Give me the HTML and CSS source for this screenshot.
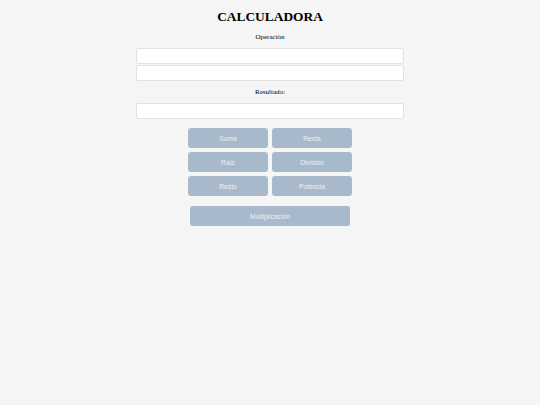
FILE: index.html
```html
<!DOCTYPE html>
<html lang="es">
<head>
<meta charset="utf-8">
<title>Calculadora</title>
<link rel="stylesheet" href="styles.css">
</head>
<body>
<main class="calc">
  <h1 class="title">CALCULADORA</h1>
  <label class="label">Operación</label>
  <div class="inputs">
    <input class="field" type="text">
    <input class="field" type="text">
  </div>
  <label class="label label-result">Resultado:</label>
  <input class="field" type="text">
  <div class="grid">
    <button class="btn">Suma</button>
    <button class="btn">Resta</button>
    <button class="btn">Raíz</button>
    <button class="btn">División</button>
    <button class="btn">Resto</button>
    <button class="btn">Potencia</button>
  </div>
  <button class="btn btn-wide">Multiplicación</button>
</main>
</body>
</html>
```
FILE: styles.css
```css
html, body {
  margin: 0;
  padding: 0;
  background: #f5f5f5;
}
body {
  font-family: "Liberation Serif", "Times New Roman", serif;
  color: #000;
}
.calc {
  width: 268px;
  margin: 0 auto;
  display: flex;
  flex-direction: column;
  align-items: center;
}
.title {
  font-size: 13.4px;
  line-height: 16px;
  font-weight: bold;
  margin: 9px 0 0;
}
.label {
  font-size: 7px;
  line-height: 8px;
  margin-top: 8px;
  margin-bottom: 7px;
}
.label-result {
  margin-top: 7px;
}
.inputs {
  display: flex;
  flex-direction: column;
  gap: 1px;
  width: 100%;
}
.field {
  box-sizing: border-box;
  width: 100%;
  height: 16px;
  margin: 0;
  padding: 0 4px;
  background: #fff;
  border: 1px solid #e2e2e2;
  border-radius: 2px;
  outline: none;
}
.grid {
  display: grid;
  grid-template-columns: 80px 80px;
  grid-auto-rows: 20px;
  gap: 4px;
  margin-top: 9px;
}
.btn {
  margin: 0;
  padding: 0;
  border: none;
  border-radius: 3px;
  background: #a9b9cc;
  color: #eef1f5;
  font-family: "Liberation Sans", Arial, sans-serif;
  font-size: 6.7px;
}
.btn-wide {
  width: 160px;
  height: 20px;
  margin-top: 10px;
}
```
